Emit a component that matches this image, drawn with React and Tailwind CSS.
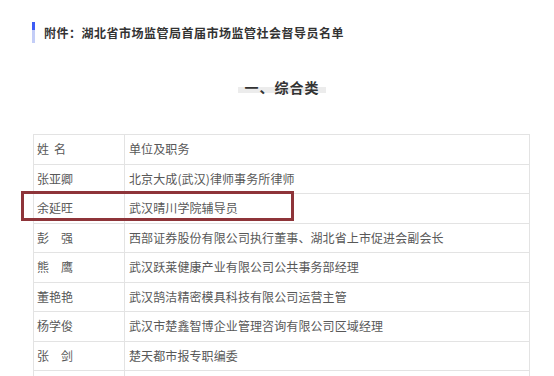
import React from 'react'

const rows = [
  [['姓', '名'], '单位及职务', 'wide'],
  [['张亚卿'], '北京大成(武汉)律师事务所律师'],
  [['余延旺'], '武汉晴川学院辅导员'],
  [['彭', '强'], '西部证券股份有限公司执行董事、湖北省上市促进会副会长'],
  [['熊', '鹰'], '武汉跃莱健康产业有限公司公共事务部经理'],
  [['董艳艳'], '武汉鹄洁精密模具科技有限公司运营主管'],
  [['杨学俊'], '武汉市楚鑫智博企业管理咨询有限公司区域经理'],
  [['张', '剑'], '楚天都市报专职编委'],
  [[''], ''],
]

function Name({ parts, wide }) {
  if (parts.length === 1) return <span>{parts[0]}</span>
  return (
    <span className="flex">
      <span>{parts[0]}</span>
      <span className={wide ? 'ml-[5px]' : 'ml-[12px]'}>{parts[1]}</span>
    </span>
  )
}

export default function App() {
  return (
    <div
      className="w-[554px] h-[376px] overflow-hidden bg-white text-[#585858]"
      style={{ fontFamily: '"Noto Sans CJK SC", "Noto Sans", sans-serif' }}
    >
      <div className="flex items-center pl-[32px] pt-[22px]">
        <div className="flex flex-col w-[3px] h-[21px]">
          <div className="h-[8px] bg-[#3d5cf5]" />
          <div className="flex-1 bg-[#c3cdf7]" />
        </div>
        <div className="ml-[9px] text-[12px] font-bold tracking-[0.5px] text-[#333] leading-none">
          附件：湖北省市场监管局首届市场监管社会督导员名单
        </div>
      </div>

      <div className="flex justify-center pl-[10px] mt-[34px]">
        <div className="relative w-[88px] flex justify-center">
          <div className="absolute left-0 right-0 top-[10px] h-[6px] bg-[#ececec]" />
          <span className="relative text-[14px] font-bold text-[#333] tracking-[1px] leading-[20px]">
            一、综合类
          </span>
        </div>
      </div>

      <div className="relative ml-[33px] mt-[37px] w-[497px]">
        <div className="border-t border-l border-[#e3e3e3]">
          {rows.map(([name, job, wide], i) => (
            <div key={i} className="flex h-[29.5px] border-b border-[#e3e3e3] text-[12px]">
              <div className="w-[91px] shrink-0 border-r border-[#e3e3e3] flex items-center pl-[3px]">
                <Name parts={name} wide={wide} />
              </div>
              <div className="flex-1 border-r border-[#e3e3e3] flex items-center pl-[4px] tracking-[0.1px]">
                {job}
              </div>
            </div>
          ))}
        </div>
        <div className="absolute left-[-12px] top-[57px] w-[273px] h-[30px] border-[3px] border-[#8e3439]" />
      </div>
    </div>
  )
}
